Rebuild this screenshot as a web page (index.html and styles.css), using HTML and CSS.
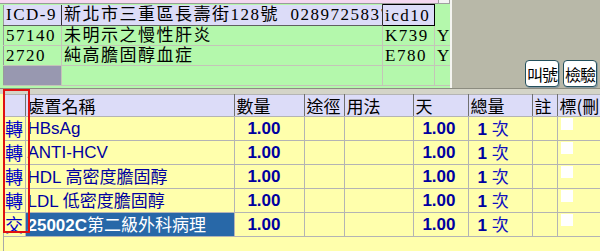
FILE: index.html
```html
<!DOCTYPE html>
<html lang="zh-Hant">
<head>
  <meta charset="UTF-8">
  <title>處置</title>
  <link rel="stylesheet" href="styles.css">
</head>
<body>

  <!-- 診斷 -->
  <div class="top">
    <div class="dx-panel">
      <div class="strip"><span class="thumb"></span></div>
      <table class="dx">
        <colgroup>
          <col style="width:58px"><col style="width:321px"><col style="width:52px"><col>
        </colgroup>
        <tr class="dx-head">
          <th>ICD-9</th>
          <th>新北市三重區長壽街128號&nbsp; 0289725837</th>
          <th class="focus">icd10</th>
          <td></td>
        </tr>
        <tr>
          <td>57140</td>
          <td>未明示之慢性肝炎</td>
          <td>K739</td>
          <td>Y</td>
        </tr>
        <tr>
          <td>2720</td>
          <td>純高膽固醇血症</td>
          <td>E780</td>
          <td>Y</td>
        </tr>
        <tr>
          <td class="blank"></td>
          <td></td>
          <td></td>
          <td></td>
        </tr>
      </table>
    </div>
    <div class="actions">
      <button class="btn">叫號</button>
      <button class="btn">檢驗</button>
    </div>
  </div>

  <!-- 處置 -->
  <div class="orders">
    <div class="grid-wrap">
      <table class="rx">
        <colgroup>
          <col style="width:21px"><col style="width:209px"><col style="width:70px"><col style="width:40px">
          <col style="width:69px"><col style="width:55px"><col style="width:64px"><col style="width:25px"><col style="width:60px">
        </colgroup>
        <tr class="rx-head">
          <th></th>
          <th>處置名稱</th>
          <th>數量</th>
          <th>途徑</th>
          <th>用法</th>
          <th>天</th>
          <th>總量</th>
          <th>註</th>
          <th>標(刪</th>
        </tr>
        <tr>
          <td class="kind">轉</td>
          <td class="name">HBsAg</td>
          <td class="qty">1.00</td><td></td><td></td>
          <td class="days">1.00</td>
          <td class="total">1 <span>次</span></td>
          <td></td>
          <td class="flag"><span class="box"></span></td>
        </tr>
        <tr>
          <td class="kind">轉</td>
          <td class="name">ANTI-HCV</td>
          <td class="qty">1.00</td><td></td><td></td>
          <td class="days">1.00</td>
          <td class="total">1 <span>次</span></td>
          <td></td>
          <td class="flag"><span class="box"></span></td>
        </tr>
        <tr>
          <td class="kind">轉</td>
          <td class="name">HDL <span>高密度膽固醇</span></td>
          <td class="qty">1.00</td><td></td><td></td>
          <td class="days">1.00</td>
          <td class="total">1 <span>次</span></td>
          <td></td>
          <td class="flag"><span class="box"></span></td>
        </tr>
        <tr>
          <td class="kind">轉</td>
          <td class="name">LDL <span>低密度膽固醇</span></td>
          <td class="qty">1.00</td><td></td><td></td>
          <td class="days">1.00</td>
          <td class="total">1 <span>次</span></td>
          <td></td>
          <td class="flag"><span class="box"></span></td>
        </tr>
        <tr>
          <td class="kind">交</td>
          <td class="name selected">25002C<span>第二級外科病理</span></td>
          <td class="qty">1.00</td><td></td><td></td>
          <td class="days">1.00</td>
          <td class="total">1 <span>次</span></td>
          <td></td>
          <td class="flag"><span class="box"></span></td>
        </tr>
      </table>
    </div>
    <div class="mark"></div>
  </div>

</body>
</html>
```

FILE: styles.css
```css
html, body {
  margin: 0;
  padding: 0;
  width: 600px;
  height: 251px;
  overflow: hidden;
  background: #b8b8a8;
}

/* 上半：診斷 */
.top {
  display: flex;
  height: 88px;
}

.dx-panel {
  width: 452px;
  height: 88px;
  background: #b4f8ac;
  border-right: 2px solid #f4f4f0;
  padding-left: 3px;
  box-sizing: border-box;
  display: flex;
  flex-direction: column;
}

.strip {
  height: 3px;
  margin-left: -3px;
  background: #f4d8f0;
  border-bottom: 1px solid #9a9a9a;
  position: relative;
}

.thumb {
  position: absolute;
  right: 0;
  top: -1px;
  width: 10px;
  height: 3px;
  background: #f4f4f4;
  border: 1px solid #a0a0a0;
}

.dx {
  border-collapse: collapse;
  table-layout: fixed;
  width: 447px;
  font-family: "Liberation Serif", "Noto Sans CJK TC", serif;
  font-size: 17px;
  letter-spacing: 1.5px;
  color: #000;
  border-left: 1px solid #9a9a9a;
}

.dx th,
.dx td {
  height: 19px;
  padding: 0 0 0 2px;
  border: 1px solid #c4c4b8;
  border-top: none;
  white-space: nowrap;
  overflow: hidden;
  text-align: left;
  font-weight: normal;
  line-height: 19px;
}

.dx-head th {
  height: 20px;
  background: #dcdcf8;
  border-right: 1px solid #303030;
  border-bottom: 1px solid #606060;
}

.dx-head th:first-child {
  border-left: none;
}

.dx-head .focus {
  border: 1px solid #000;
}

.dx-head td {
  border: none;
}

.dx td:first-child {
  border-left: none;
}

.dx td:last-child {
  border-right: none;
}

.dx .blank {
  background: #9898b0;
}

.actions {
  flex: 1;
  display: flex;
  justify-content: flex-end;
  align-items: flex-end;
  gap: 4px;
  padding: 0 3px 1px 0;
}

.btn {
  width: 34px;
  height: 27px;
  padding: 0;
  background: #fff;
  border: 1px solid #24505c;
  border-radius: 4px;
  box-shadow: 1px 1px 0 #8a9aa0;
  font-family: "Noto Sans CJK TC", sans-serif;
  font-size: 16px;
  letter-spacing: -1px;
  color: #000;
}

/* 下半：處置 */
.orders {
  position: relative;
  height: 163px;
  border-top: 1px solid #8c8c80;
  background: #ffffac;
  padding-top: 5px;
  box-sizing: border-box;
  display: flex;
}

.orders::before {
  content: "";
  position: absolute;
  left: 0;
  right: 0;
  top: 0;
  height: 5px;
  background: #d4d4c8;
}

.grid-wrap {
  margin-left: 3px;
  border-left: 1px solid #a8a8a8;
  flex: 1;
}

.rx {
  border-collapse: collapse;
  table-layout: fixed;
  width: 613px;
  font-family: "Liberation Sans", "Noto Sans CJK TC", sans-serif;
  color: #0000a0;
}

.rx th,
.rx td {
  height: 21px;
  padding: 0;
  border: 1px solid #b4b4b4;
  border-top: none;
  white-space: nowrap;
  overflow: hidden;
  line-height: 21px;
}

.rx tr > :first-child {
  border-left: none;
}

.rx-head th {
  background: #dcdcf8;
  color: #000;
  font-family: "Noto Sans CJK TC", sans-serif;
  font-weight: normal;
  font-size: 17px;
  text-align: left;
  padding-left: 2px;
  border-top: 1px solid #b4b4b4;
  border-right-color: #707070;
}

.rx .kind {
  font-family: "Noto Sans CJK TC", sans-serif;
  font-size: 18px;
  color: #0000c8;
  text-align: left;
  padding-left: 1px;
}

.rx .name {
  padding-left: 2px;
  font-size: 17px;
}

.rx .name span {
  font-family: "Noto Sans CJK TC", sans-serif;
  font-size: 17px;
}

.rx .selected {
  background: #2868a8;
  color: #fff;
  font-weight: bold;
}

.rx .selected span {
  font-weight: normal;
}

.rx .qty {
  text-align: right;
  padding-right: 23px;
  font-size: 17px;
  font-weight: bold;
}

.rx .days {
  text-align: right;
  padding-right: 12px;
  font-size: 17px;
  font-weight: bold;
}

.rx .total {
  padding-left: 9px;
  font-size: 17px;
  font-weight: bold;
}

.rx .total span {
  font-family: "Noto Sans CJK TC", sans-serif;
  font-weight: normal;
  color: #1010c0;
}

.rx .flag {
  vertical-align: top;
}

.box {
  display: block;
  width: 12px;
  height: 12px;
  margin: 1px 0 0 3px;
  background: #fff;
}

.mark {
  position: absolute;
  left: 3px;
  top: 0;
  width: 23px;
  height: 140px;
  border: 2px solid #e01010;
}
```
